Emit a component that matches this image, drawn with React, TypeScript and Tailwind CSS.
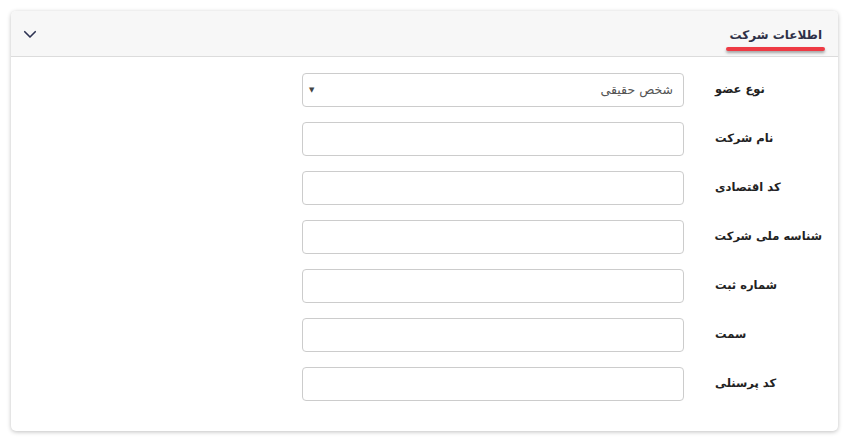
import { FC } from "react";

const fields = [
  "نام شرکت",
  "کد اقتصادی",
  "شناسه ملی شرکت",
  "شماره ثبت",
  "سمت",
  "کد پرسنلی",
];

const App: FC = () => {
  return (
    <div
      dir="rtl"
      className="min-h-screen bg-white p-[11px] pr-[12px]"
      style={{ fontFamily: '"DejaVu Sans", sans-serif' }}
    >
      <div className="rounded-[5px] bg-white shadow-[0_1px_4px_rgba(0,0,0,0.25)]">
        {/* header */}
        <div className="flex h-[46px] items-center justify-between rounded-t-[5px] border-b border-[#dcdcdc] bg-[#f7f7f7] pl-[10px] pr-[16px]">
          <div className="relative">
            <span className="whitespace-nowrap text-[12px] font-bold text-[#2e3047]">
              اطلاعات شرکت
            </span>
            <div className="absolute -left-[4px] -right-[3px] top-[25px] h-[4px] rounded-full bg-[#ee3a44] shadow-[0_2px_3px_rgba(0,0,0,0.35)]" />
          </div>
          <svg
            width="18"
            height="18"
            viewBox="0 0 24 24"
            fill="none"
            stroke="#2d3252"
            strokeWidth="2.2"
            strokeLinecap="round"
            strokeLinejoin="round"
          >
            <path d="M5 9l7 7 7-7" />
          </svg>
        </div>

        {/* body */}
        <div className="flex flex-col gap-[15px] pb-[30px] pr-[16px] pt-[16px]">
          <div className="flex items-center">
            <label className="w-[107px] whitespace-nowrap text-left text-[11.5px] font-bold text-[#222]">
              نوع عضو
            </label>
            <div className="mr-[31px] flex h-[34px] w-[382px] items-center justify-between rounded-[4px] border border-[#cccccc] bg-white pl-[6px] pr-[10px]">
              <span className="text-[12.5px] text-[#555]">شخص حقیقی</span>
              <span className="text-[7px] text-[#444]">▼</span>
            </div>
          </div>
          {fields.map((f) => (
            <div key={f} className="flex items-center">
              <label className="w-[107px] whitespace-nowrap text-left text-[11.5px] font-bold text-[#222]">
                {f}
              </label>
              <input
                type="text"
                className="mr-[31px] h-[34px] w-[382px] rounded-[4px] border border-[#cccccc] bg-white px-[10px] text-[13px] outline-none"
              />
            </div>
          ))}
        </div>
      </div>
    </div>
  );
};

export default App;
